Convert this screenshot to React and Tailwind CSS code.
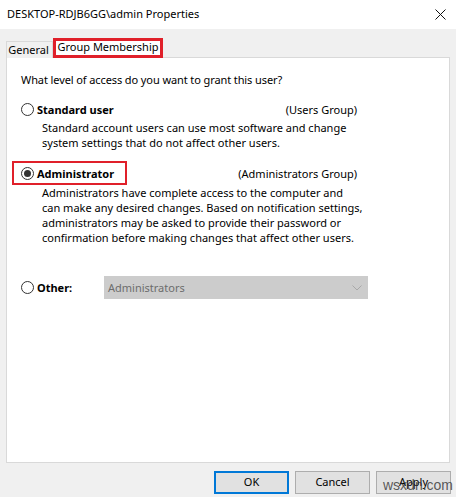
import { useState } from 'react'

function Radio({ checked }) {
  return (
    <span className="flex h-[13px] w-[13px] shrink-0 items-center justify-center rounded-full border border-[#333333] bg-white">
      {checked && <span className="h-[7px] w-[7px] rounded-full bg-[#333333]" />}
    </span>
  )
}

function Button({ children, primary }) {
  return (
    <button
      type="button"
      className={
        'flex h-[23px] w-[75px] items-center justify-center bg-[#e1e1e1] text-[11px] text-black ' +
        (primary ? 'border-2 border-[#0078d7]' : 'border border-[#adadad]')
      }
    >
      {children}
    </button>
  )
}

export default function App() {
  const [choice, setChoice] = useState('admin')

  return (
    <div className="relative flex h-[497px] w-[456px] flex-col bg-[#f0f0f0] font-['Noto_Sans',sans-serif] text-[11px] text-black">
      {/* Title bar */}
      <div className="flex h-[29px] items-center justify-between bg-white pl-[7px] pr-[9px]">
        <span className="text-[11px]">DESKTOP-RDJB6GG\admin Properties</span>
        <svg width="11" height="11" viewBox="0 0 11 11" className="mr-[1px]">
          <path d="M0.5 0.5 L10.5 10.5 M10.5 0.5 L0.5 10.5" stroke="#111" strokeWidth="1" fill="none" />
        </svg>
      </div>

      <div className="px-[6px] pt-[8px]">
        {/* Tabs */}
        <div className="relative z-10 flex h-[20px] items-end">
          <div className="mb-[-1px] flex h-[17px] w-[47px] items-center justify-center border border-b-0 border-[#d9d9d9] bg-[#f0f0f0] pr-[2px]">
            General
          </div>
          <div className="mb-[-1px] flex h-[20px] w-[110px] items-center justify-center border-[3px] border-[#e0202a] bg-white pb-[2px]">
            Group Membership
          </div>
        </div>

        {/* Panel */}
        <div className="h-[406px] border border-[#d9d9d9] bg-white pl-[14px] pt-[14px] leading-[15px]">
          <p className="tracking-[-0.1px]">What level of access do you want to grant this user?</p>

          <label className="mt-[15px] flex w-[336px] items-center justify-between" onClick={() => setChoice('standard')}>
            <span className="flex items-center gap-[3px]">
              <Radio checked={choice === 'standard'} />
              <span className="font-bold">Standard user</span>
            </span>
            <span>(Users Group)</span>
          </label>
          <p className="mt-[3px] pl-[21px] whitespace-nowrap">
            Standard account users can use most software and change
            <br />
            system settings that do not affect other users.
          </p>

          <label className="relative mt-[16px] flex w-[336px] items-center justify-between" onClick={() => setChoice('admin')}>
            <span className="flex items-center gap-[3px]">
              <Radio checked={choice === 'admin'} />
              <span className="font-bold">Administrator</span>
            </span>
            <span>(Administrators Group)</span>
            {/* red highlight */}
            <span className="pointer-events-none absolute left-[-9px] top-[-5px] h-[24px] w-[115px] border-2 border-[#e0202a]" />
          </label>
          <p className="mt-[4px] pl-[21px] whitespace-nowrap">
            Administrators have complete access to the computer and
            <br />
            can make any desired changes. Based on notification settings,
            <br />
            administrators may be asked to provide their password or
            <br />
            confirmation before making changes that affect other users.
          </p>

          <div className="mt-[31px] flex items-center" onClick={() => setChoice('other')}>
            <span className="flex w-[83px] items-center gap-[3px]">
              <Radio checked={choice === 'other'} />
              <span className="font-bold">Other:</span>
            </span>
            <div className="flex h-[23px] w-[264px] items-center justify-between bg-[#cccccc] pl-[4px] pr-[6px] text-[#6d6d6d]">
              <span>Administrators</span>
              <svg width="10" height="6" viewBox="0 0 10 6">
                <path d="M0.5 0.5 L5 5 L9.5 0.5" stroke="#a8a8a8" strokeWidth="1" fill="none" />
              </svg>
            </div>
          </div>
        </div>
      </div>

      {/* Buttons */}
      <div className="mt-[8px] flex justify-end gap-[6px] pr-[5px]">
        <Button primary>OK</Button>
        <Button>Cancel</Button>
        <Button>Apply</Button>
      </div>

      {/* watermark */}
      <span className="pointer-events-none absolute left-[383px] top-[478px] font-['Liberation_Sans',sans-serif] text-[14px] leading-[14px] text-[#333333]/80">
        wsxdn.com
      </span>
    </div>
  )
}
